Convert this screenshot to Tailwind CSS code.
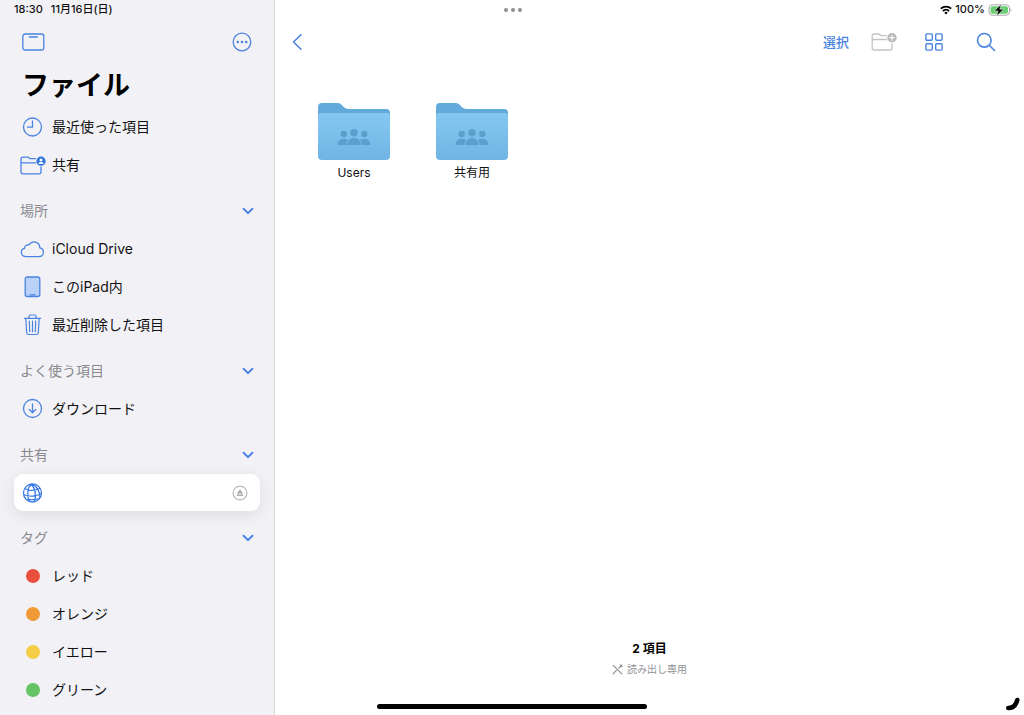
<!DOCTYPE html>
<html lang="ja">
<head>
    <meta charset="UTF-8">
    <meta name="viewport" content="width=device-width, initial-scale=1.0">
    <title>ファイル</title>
    <script src="https://cdn.jsdelivr.net/npm/@tailwindcss/browser@4"></script>
</head>
<body class="relative flex min-h-screen bg-white font-['Inter','Noto_Sans_CJK_JP',sans-serif] text-sm text-[#111113]">

    <!-- Status bar -->
    <div class="absolute inset-x-0 top-0 grid h-5 grid-cols-3 items-center pl-3.5 pr-3 text-[11px] font-medium">
        <div class="flex gap-2">
            <span>18:30</span>
            <span>11月16日(日)</span>
        </div>
        <div class="flex justify-center gap-[3px]">
            <span class="size-1 rounded-full bg-[#8e8e93]"></span>
            <span class="size-1 rounded-full bg-[#8e8e93]"></span>
            <span class="size-1 rounded-full bg-[#8e8e93]"></span>
        </div>
        <div class="flex items-center justify-end gap-[3px]">
            <svg class="h-[10px] w-3" viewBox="0 0 12 10" fill="none" stroke="#000" stroke-width="1.8">
                <path d="M.8 3.7a7.4 7.4 0 0 1 10.4 0"/>
                <path d="M2.9 6a4.4 4.4 0 0 1 6.2 0"/>
                <path d="M6 9.4 4.3 7.7a2.4 2.4 0 0 1 3.4 0z" fill="#000" stroke="none"/>
            </svg>
            <span>100%</span>
            <svg class="h-3 w-6" viewBox="0 0 24 12">
                <rect x="1" y=".8" width="20.5" height="10.4" rx="3.2" fill="#fff" stroke="#a9a9ab"/>
                <rect x="2.5" y="2.3" width="17.5" height="7.4" rx="2" fill="#69cf72"/>
                <path d="M22.5 4.3c1.3.5 1.3 2.9 0 3.4z" fill="#a9a9ab"/>
                <path d="M13.300.2 6.300 6.900h3.700l-1.300 5 7-6.700h-3.900z" fill="#000" stroke="#fff" stroke-width=".5"/>
            </svg>
        </div>
    </div>

    <!-- Sidebar -->
    <aside class="w-[275px] shrink-0 border-r border-[#dcdce0] bg-[#f2f1f6] px-3.5 pt-6">
        <div class="flex h-9 items-center justify-between px-2">
            <button aria-label="サイドバー">
                <svg class="h-[18px] w-[23px]" viewBox="0 0 23 18" fill="none" stroke="#4a84e0" stroke-width="1.3" stroke-linecap="round">
                    <rect x=".8" y="1" width="21" height="16" rx="2.2"/>
                    <path d="M7.300 4h8"/>
                </svg>
            </button>
            <button aria-label="その他">
                <svg class="size-5" viewBox="0 0 20 20" fill="none" stroke="#4a84e0" stroke-width="1.3">
                    <circle cx="10" cy="10" r="8.8"/>
                    <g fill="#4a84e0" stroke="none">
                        <circle cx="5.8" cy="10" r="1.3"/>
                        <circle cx="10" cy="10" r="1.3"/>
                        <circle cx="14.2" cy="10" r="1.3"/>
                    </g>
                </svg>
            </button>
        </div>
        <h1 class="flex h-12 items-center px-2 pt-1 text-[27px] font-bold text-black">ファイル</h1>

        <nav class="flex flex-col gap-2">
            <ul>
                <li>
                    <a href="#" class="flex h-[38px] items-center gap-1.5 px-1.5">
                        <svg class="h-6 w-[26px]" viewBox="0 0 26 24" fill="none" stroke="#4a84e0" stroke-width="1.3" stroke-linecap="round" stroke-linejoin="round">
                            <circle cx="12.5" cy="12" r="9"/>
                            <path d="M12.500 6v6.200H7.500"/>
                        </svg>
                        最近使った項目
                    </a>
                </li>
                <li>
                    <a href="#" class="flex h-[38px] items-center gap-1.5 px-1.5">
                        <svg class="h-6 w-[26px]" viewBox="0 0 26 24" fill="none" stroke="#4a84e0" stroke-width="1.3" stroke-linecap="round" stroke-linejoin="round">
                            <path d="M15.500 5.700H10L8.200 4.200H3Q1 4.200 1 6.200V18.800Q1 20.800 3 20.800H19Q21 20.800 21 18.800V14M1 9.900H15.500"/>
                            <circle cx="21" cy="8.2" r="4.6" fill="#2f74dc" stroke="none"/>
                            <circle cx="21" cy="7" r="1.5" fill="#fff" stroke="none"/>
                            <path d="M18.400 10.900c.4-2.400 4.800-2.400 5.200 0z" fill="#fff" stroke="none"/>
                        </svg>
                        共有
                    </a>
                </li>
            </ul>

            <section>
                <h2>
                    <button class="flex h-[38px] w-full items-center justify-between px-1.5 text-[#89898e]">
                        場所
                        <svg class="h-2 w-3" viewBox="0 0 12 8" fill="none" stroke="#3b7ae4" stroke-width="1.8" stroke-linecap="round" stroke-linejoin="round"><path d="m1.500 1.700 4.500 4.500 4.500-4.500"/></svg>
                    </button>
                </h2>
                <ul>
                    <li>
                        <a href="#" class="flex h-[38px] items-center gap-1.5 px-1.5">
                            <svg class="h-6 w-[26px]" viewBox="0 0 26 24" fill="none" stroke="#4a84e0" stroke-width="1.3" stroke-linejoin="round">
                                <path d="M6.200 19.700C3.300 19.700 1.300 17.800 1.300 15.300C1.300 13.200 2.700 11.700 4.600 11.300C4.600 8.800 6.800 7.400 8.900 8C10 6 11.800 4.800 14 4.800C17.400 4.800 19.900 7.400 19.900 10.900C22 11.300 23.400 13 23.400 15.200C23.400 17.800 21.500 19.700 18.900 19.700Z"/>
                            </svg>
                            iCloud Drive
                        </a>
                    </li>
                    <li>
                        <a href="#" class="flex h-[38px] items-center gap-1.5 px-1.5">
                            <svg class="h-6 w-[26px]" viewBox="0 0 26 24" fill="none" stroke="#4a84e0" stroke-width="1.3" stroke-linecap="round">
                                <rect x="5.2" y="2" width="14.6" height="19.5" rx="2" fill="#bad2f8"/>
                                <path d="M10 19.800h5"/>
                            </svg>
                            このiPad内
                        </a>
                    </li>
                    <li>
                        <a href="#" class="flex h-[38px] items-center gap-1.5 px-1.5">
                            <svg class="h-6 w-[26px]" viewBox="0 0 26 24" fill="none" stroke="#4a84e0" stroke-width="1.2" stroke-linecap="round" stroke-linejoin="round">
                                <path d="M4.300 5.300H20.700M9 5.300V3.500Q9 2 10.500 2H14.500Q16 2 16 3.500V5.300M5.800 5.300 6.700 19.700Q6.800 21.500 8.600 21.500H16.400Q18.200 21.500 18.300 19.700L19.200 5.300M9.300 8.200 9.700 18.700M12.500 8.200V18.700M15.700 8.200 15.300 18.700"/>
                            </svg>
                            最近削除した項目
                        </a>
                    </li>
                </ul>
            </section>

            <section>
                <h2>
                    <button class="flex h-[38px] w-full items-center justify-between px-1.5 text-[#89898e]">
                        よく使う項目
                        <svg class="h-2 w-3" viewBox="0 0 12 8" fill="none" stroke="#3b7ae4" stroke-width="1.8" stroke-linecap="round" stroke-linejoin="round"><path d="m1.500 1.700 4.500 4.500 4.500-4.500"/></svg>
                    </button>
                </h2>
                <a href="#" class="flex h-[38px] items-center gap-1.5 px-1.5">
                    <svg class="h-6 w-[26px]" viewBox="0 0 26 24" fill="none" stroke="#4a84e0" stroke-width="1.3" stroke-linecap="round" stroke-linejoin="round">
                        <circle cx="12.5" cy="11.5" r="9"/>
                        <path d="M12.500 7v8.600M9.300 12.500l3.200 3.200 3.200-3.200"/>
                    </svg>
                    ダウンロード
                </a>
            </section>

            <section>
                <h2>
                    <button class="flex h-[38px] w-full items-center justify-between px-1.5 text-[#89898e]">
                        共有
                        <svg class="h-2 w-3" viewBox="0 0 12 8" fill="none" stroke="#3b7ae4" stroke-width="1.8" stroke-linecap="round" stroke-linejoin="round"><path d="m1.500 1.700 4.500 4.500 4.500-4.500"/></svg>
                    </button>
                </h2>
                <div class="flex h-[37px] items-center justify-between rounded-[9px] bg-white pl-1.5 pr-3 shadow-[0_4px_16px_rgba(0,0,0,0.09)]">
                    <a href="#" aria-label="サーバ">
                        <svg class="h-6 w-[26px]" viewBox="0 0 26 24" fill="none" stroke="#3b7ae4" stroke-width="1.3">
                            <circle cx="12.5" cy="12" r="9"/>
                            <path d="M11.500 3C7.300 6.500 6.600 14 9.600 20.500M11.500 3C15 7.500 16.300 14 14.500 20.800M11.500 3C17 5 20.300 10.500 19.800 17M4.700 7.500C9.500 10 15.500 9.800 20 7.200M3.600 13.500C9 16 16.500 15.500 21.400 12.500M6.300 18.300C10.500 19 15 18.800 19 17.500"/>
                        </svg>
                    </a>
                    <button aria-label="取り出す">
                        <svg class="size-4" viewBox="0 0 16 16" fill="none" stroke="#b9b9bb" stroke-width="1.2">
                            <circle cx="8" cy="8" r="6.9"/>
                            <path d="M8 4.200 11.300 8.700H4.700zM4.800 9.500h6.400v1.500H4.800z" fill="#b0b0b2" stroke="none"/>
                        </svg>
                    </button>
                </div>
            </section>

            <section>
                <h2>
                    <button class="flex h-[38px] w-full items-center justify-between px-1.5 text-[#89898e]">
                        タグ
                        <svg class="h-2 w-3" viewBox="0 0 12 8" fill="none" stroke="#3b7ae4" stroke-width="1.8" stroke-linecap="round" stroke-linejoin="round"><path d="m1.500 1.700 4.500 4.500 4.500-4.500"/></svg>
                    </button>
                </h2>
                <ul>
                    <li><a href="#" class="flex h-[38px] items-center gap-3 pl-3"><span class="size-3.5 rounded-full bg-[#ea4e3d]"></span>レッド</a></li>
                    <li><a href="#" class="flex h-[38px] items-center gap-3 pl-3"><span class="size-3.5 rounded-full bg-[#f09a37]"></span>オレンジ</a></li>
                    <li><a href="#" class="flex h-[38px] items-center gap-3 pl-3"><span class="size-3.5 rounded-full bg-[#f5ce46]"></span>イエロー</a></li>
                    <li><a href="#" class="flex h-[38px] items-center gap-3 pl-3"><span class="size-3.5 rounded-full bg-[#65c466]"></span>グリーン</a></li>
                </ul>
            </section>
        </nav>
    </aside>

    <!-- Content -->
    <main class="flex flex-1 flex-col pt-6">
        <div class="flex h-9 items-center justify-between pl-4 pr-2.5">
            <button aria-label="戻る">
                <svg class="h-[18px] w-3" viewBox="0 0 12 18" fill="none" stroke="#4a84e0" stroke-width="1.6" stroke-linecap="round" stroke-linejoin="round"><path d="M10 1.700 2.500 9l7.500 7.300"/></svg>
            </button>
            <div class="flex items-center">
                <button class="w-11 text-[13px] font-medium text-[#4a84e0]">選択</button>
                <button class="flex w-13 justify-center" aria-label="新規フォルダ" disabled>
                    <svg class="h-5 w-[26px]" viewBox="0 0 26 20" fill="none" stroke="#c3c3c5" stroke-width="1.3" stroke-linecap="round" stroke-linejoin="round">
                        <path d="M15.500 3.700H10L8.200 2H3.200Q1.200 2 1.200 4V16Q1.200 18 3.200 18H19Q21 18 21 16V12M1.200 7.500H15.500"/>
                        <circle cx="21" cy="5.8" r="4.7" fill="#b9b9bb" stroke="none"/>
                        <path d="M21 3.300v5M18.500 5.800h5" stroke="#fff" stroke-width="1.1"/>
                    </svg>
                </button>
                <button class="flex w-12 justify-center" aria-label="表示">
                    <svg class="size-[18px]" viewBox="0 0 18 18" fill="none" stroke="#4a84e0" stroke-width="1.4">
                        <rect x=".9" y=".9" width="6.4" height="6.4" rx="1"/>
                        <rect x="10.7" y=".9" width="6.4" height="6.4" rx="1"/>
                        <rect x=".9" y="10.7" width="6.4" height="6.4" rx="1"/>
                        <rect x="10.7" y="10.7" width="6.4" height="6.4" rx="1"/>
                    </svg>
                </button>
                <button class="flex w-14 justify-center" aria-label="検索">
                    <svg class="size-5" viewBox="0 0 20 20" fill="none" stroke="#4a84e0" stroke-width="1.6" stroke-linecap="round">
                        <circle cx="8.3" cy="8.3" r="6.8"/>
                        <path d="m13.300 13.300 5.200 5.200"/>
                    </svg>
                </button>
            </div>
        </div>

        <!-- Shared folder shape; zero-sized so that its gradient still resolves -->
        <svg class="absolute size-0">
            <defs>
                <linearGradient id="front" x1="0" y1="0" x2="0" y2="1">
                    <stop offset="0" stop-color="#84c8f1"/>
                    <stop offset="1" stop-color="#70b4e5"/>
                </linearGradient>
                <symbol id="folder" viewBox="0 0 72 57">
                    <path d="M0 4Q0 0 4 0H19.500Q21.500 0 23 1.200L26 4.200Q28 6 30.500 6H68Q72 6 72 10V30H0Z" fill="#62a9dc"/>
                    <path d="M0 13Q0 10 3 10H69Q72 10 72 13V53Q72 57 68 57H4Q0 57 0 53Z" fill="url(#front)"/>
                    <g fill="#5b9fcf">
                        <circle cx="25.7" cy="31" r="3.2"/>
                        <circle cx="36" cy="29.8" r="3.8"/>
                        <circle cx="46.3" cy="31" r="3.2"/>
                        <path d="M29.200 42C29.200 38 32 35 36 35S42.800 38 42.800 42Z"/>
                        <path d="M19.500 42C19.500 38.200 22 35.800 25.500 35.800Q28 35.800 30 37Q28.200 39.200 28 42Z"/>
                        <path d="M52.500 42C52.500 38.200 50 35.800 46.500 35.800Q44 35.800 42 37Q43.800 39.200 44 42Z"/>
                    </g>
                </symbol>
            </defs>
        </svg>

        <div class="grid grid-cols-[repeat(auto-fill,118px)] pl-5 pt-[43px] text-xs">
            <a href="#" class="flex flex-col items-center gap-[3px]">
                <svg class="h-[57px] w-[72px]"><use href="#folder"/></svg>
                <span class="leading-5">Users</span>
            </a>
            <a href="#" class="flex flex-col items-center gap-[3px]">
                <svg class="h-[57px] w-[72px]"><use href="#folder"/></svg>
                <span class="leading-5">共有用</span>
            </a>
        </div>

        <div class="mt-auto pb-9 text-center">
            <p class="text-xs leading-5 font-bold text-black">2 項目</p>
            <p class="flex items-center justify-center gap-1 text-[10px] leading-5 text-[#929297]">
                <svg class="size-[11px]" viewBox="0 0 10 10" fill="none" stroke="#8a8a8f" stroke-linecap="round">
                    <path d="M1 1.300 9 9M9 1 6.300 3.700M4 5.900 1 9M7.500.8 9.200 2.500"/>
                </svg>
                読み出し専用
            </p>
        </div>
    </main>

    <!-- Home indicator and corner handle lie over both panes -->
    <div class="absolute bottom-1.5 left-1/2 h-[5px] w-[270px] -translate-x-1/2 rounded-full bg-black"></div>
    <svg class="absolute bottom-1 right-1 h-3.5 w-[15px]" viewBox="0 0 15 14" fill="none" stroke="#000" stroke-width="4.6" stroke-linecap="round">
        <path d="M3.300 11Q10.300 11 12.300 3"/>
    </svg>

</body>
</html>
